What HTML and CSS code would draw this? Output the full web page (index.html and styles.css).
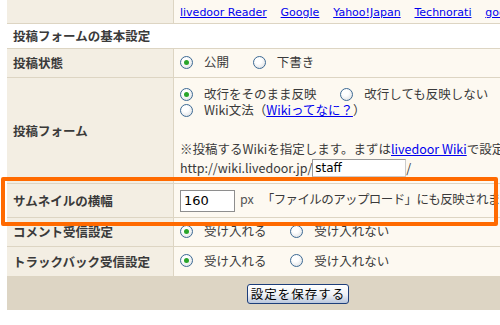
FILE: index.html
```html
<!DOCTYPE html>
<html lang="ja">
<head>
  <meta charset="UTF-8">
  <title>投稿フォームの基本設定</title>
  <link rel="stylesheet" href="styles.css">
</head>
<body>
  <div class="page">
    <table class="settings">
      <tr class="links-row">
        <td class="label"></td>
        <td class="value">
          <a href="#">livedoor Reader</a>
          <a href="#">Google</a>
          <a href="#">Yahoo!Japan</a>
          <a href="#">Technorati</a>
          <a href="#">goo</a>
        </td>
      </tr>
      <tr class="section-row">
        <td colspan="2">投稿フォームの基本設定</td>
      </tr>
      <tr class="row-status">
        <td class="label">投稿状態</td>
        <td class="value">
          <label class="opt"><span class="radio checked"></span>公開</label>
          <label class="opt"><span class="radio"></span>下書き</label>
        </td>
      </tr>
      <tr class="row-form">
        <td class="label">投稿フォーム</td>
        <td class="value">
          <div class="line">
            <label class="opt"><span class="radio checked"></span>改行をそのまま反映</label>
            <label class="opt"><span class="radio"></span>改行しても反映しない</label>
          </div>
          <div class="line">
            <label class="opt"><span class="radio"></span>Wiki文法（<a href="#">Wikiってなに？</a>）</label>
          </div>
          <div class="note">※投稿するWikiを指定します。まずは<a href="#">livedoor Wiki</a>で設定を行ってください。</div>
          <div class="url-line">http://wiki.livedoor.jp/<input class="wiki-name" type="text" value="staff">/</div>
        </td>
      </tr>
      <tr class="row-thumb">
        <td class="label">サムネイルの横幅</td>
        <td class="value">
          <input class="thumb-width" type="text" value="160"><span class="unit">px</span><span class="hint">「ファイルのアップロード」にも反映されます。</span>
        </td>
      </tr>
      <tr class="row-comment">
        <td class="label">コメント受信設定</td>
        <td class="value">
          <label class="opt"><span class="radio checked"></span>受け入れる</label>
          <label class="opt"><span class="radio"></span>受け入れない</label>
        </td>
      </tr>
      <tr class="row-trackback">
        <td class="label">トラックバック受信設定</td>
        <td class="value">
          <label class="opt"><span class="radio checked"></span>受け入れる</label>
          <label class="opt"><span class="radio"></span>受け入れない</label>
        </td>
      </tr>
      <tr class="submit-row">
        <td colspan="2"><button class="save-btn" type="button">設定を保存する</button></td>
      </tr>
    </table>

    <!-- 注目枠 -->
    <div class="highlight"></div>
  </div>
</body>
</html>
```

FILE: styles.css
```css
html, body {
  margin: 0;
  padding: 0;
  background: #fff;
  overflow: hidden;
}

body {
  font-family: "Noto Sans CJK JP", sans-serif;
  font-size: 12.5px;
  color: #3a3a3a;
}

.page {
  position: relative;
  width: 500px;
  height: 325px;
  padding-left: 7px;
  box-sizing: border-box;
}

.settings {
  width: 583px;
  border-collapse: collapse;
  table-layout: fixed;
}

.settings td {
  border: 1px solid #ddd5c3;
  padding: 0 6px;
  line-height: 16px;
  white-space: nowrap;
  overflow: hidden;
}

.settings tr:first-child td {
  border-top: none;
}

.settings td:first-child {
  border-left: none;
}

.label {
  width: 154px;
  background: #f3eee3;
  font-weight: bold;
  color: #3a3a3a;
}

.value {
  background: #fdf9f1;
}

a {
  color: #0000ee;
}

.links-row td {
  height: 23px;
  padding-bottom: 0;
}

.links-row a {
  font-family: "DejaVu Sans", sans-serif;
  font-size: 11px;
  margin-right: 11px;
}

.section-row td {
  background: #fff;
  font-weight: bold;
  height: 24px;
}

.row-status td {
  height: 28px;
}

.opt {
  display: inline-flex;
  align-items: center;
  margin-right: 21px;
}

.radio {
  display: inline-block;
  width: 11px;
  height: 11px;
  border: 1px solid #3d6a94;
  border-radius: 50%;
  background: radial-gradient(circle at 40% 35%, #fff 30%, #d6d9dc 100%);
  margin: 0 11px 0 0;
  position: relative;
}

.radio.checked::after {
  content: "";
  position: absolute;
  left: 3px;
  top: 3px;
  width: 5px;
  height: 5px;
  border-radius: 50%;
  background: #2aa52a;
}

.row-form td.label {
  vertical-align: middle;
}

.row-form td.value {
  height: 95px;
  padding-top: 8px;
  padding-bottom: 2px;
  vertical-align: top;
}

.row-form .line {
  height: 16px;
}

.note {
  margin-top: 23px;
}

.url-line {
  display: flex;
  align-items: center;
  margin-top: 2px;
}

.wiki-name {
  width: 94px;
  height: 18px;
  box-sizing: border-box;
  border: 1px solid #999;
  border-right-color: #ccc;
  border-bottom-color: #ccc;
  font-family: "DejaVu Sans", sans-serif;
  font-size: 12px;
  padding: 0 2px;
  margin: 0;
}

.row-thumb td {
  height: 33px;
}

.thumb-width {
  width: 55px;
  height: 22px;
  box-sizing: border-box;
  border: 1px solid #8e8e8e;
  font-family: "DejaVu Sans", sans-serif;
  font-size: 13px;
  padding: 0 3px;
  margin: 0;
  vertical-align: middle;
}

.unit {
  margin: 0 8px 0 5px;
  color: #555;
}

.hint {
  letter-spacing: -0.6px;
}

.row-comment td {
  height: 28px;
}

.row-trackback td {
  height: 29px;
}

.submit-row td {
  background: #ddd5c4;
  height: 33px;
  text-align: center;
  border-bottom: none;
}

.save-btn {
  width: 102px;
  height: 20px;
  padding: 0;
  border: 1px solid #1d3e7a;
  border-radius: 3px;
  background: linear-gradient(#ffffff, #eef0f5 55%, #b9c6dc);
  font-family: "Noto Sans CJK JP", sans-serif;
  font-size: 12.5px;
  line-height: 18px;
  color: #000;
  letter-spacing: 1px;
}

.highlight {
  position: absolute;
  left: 1px;
  top: 177px;
  width: 497px;
  height: 49px;
  box-sizing: border-box;
  border: 4px solid #ff6a00;
  border-radius: 2px;
}
```
